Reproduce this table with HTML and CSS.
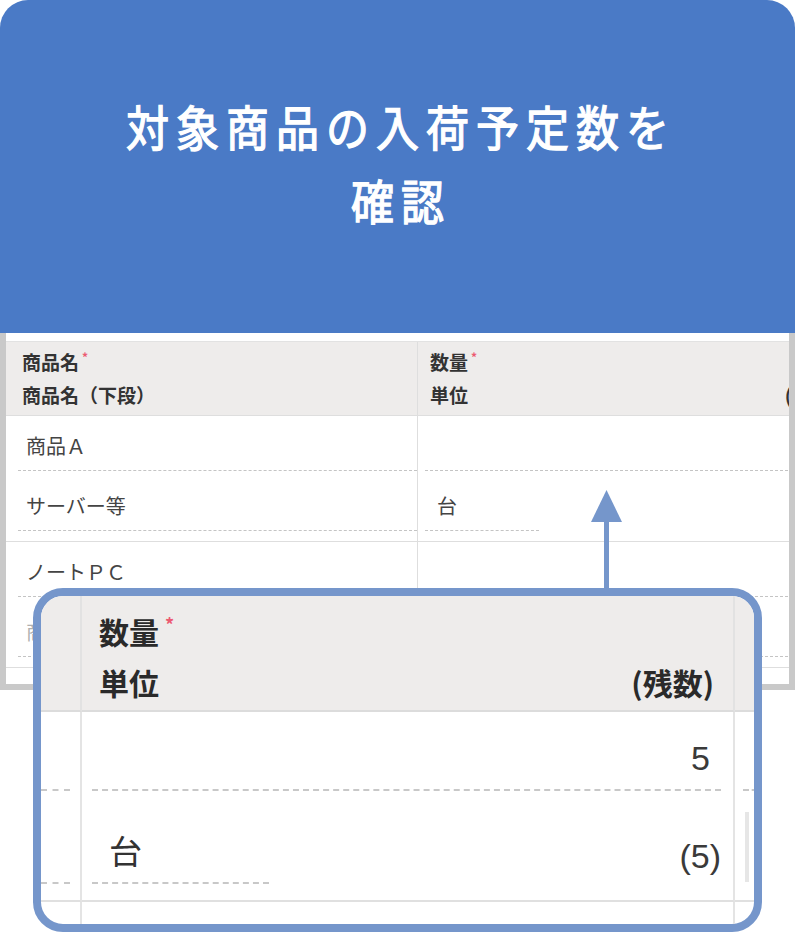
FILE: index.html
```html
<!DOCTYPE html>
<html lang="ja">
<head>
  <meta charset="UTF-8" />
  <title>対象商品の入荷予定数を確認</title>
  <link rel="stylesheet" href="styles.css">
</head>
<body>

<div class="card">
  <header class="banner">
    <h1>対象商品の入荷予定数を<br>確認</h1>
  </header>

  <!-- screenshot of the order table -->
  <div class="shot">
    <div class="grid">
      <div class="th">
        <div>商品名<span class="req">*</span></div>
        <div>商品名（下段）</div>
      </div>
      <div class="th th-last">
        <div>数量<span class="req">*</span></div>
        <div class="split"><span>単位</span><span>(残数)</span></div>
      </div>

      <div class="td">
        <div class="field">商品Ａ</div>
        <div class="field second">サーバー等</div>
      </div>
      <div class="td td-last">
        <div class="field num">5</div>
        <div class="split second">
          <div class="field unit">台</div>
          <span class="num">(5)</span>
        </div>
      </div>

      <div class="td">
        <div class="field">ノートＰＣ</div>
        <div class="field second faded">商品Ｂ</div>
      </div>
      <div class="td td-last">
        <div class="field"></div>
        <div class="field second"></div>
      </div>
    </div>
  </div>

  <svg class="arrow" width="32" height="102" viewBox="0 0 32 102">
    <polygon points="16.5,2 1,34 32,34" fill="#7596cb" />
    <rect x="14" y="33" width="5" height="69" fill="#7596cb" />
  </svg>

  <!-- magnified part -->
  <div class="lens">
    <div class="lens-grid">
      <div class="lh stub"></div>
      <div class="lh">
        <div>数量<span class="req big">*</span></div>
        <div class="split"><span>単位</span><span>(残数)</span></div>
      </div>
      <div class="lh edge"></div>

      <div class="ld stub">
        <div class="lfield"></div>
        <div class="lfield second"></div>
      </div>
      <div class="ld">
        <div class="lfield digits">5</div>
        <div class="split second">
          <div class="lfield unit">台</div>
          <span class="digits paren">(5)</span>
        </div>
      </div>
      <div class="ld edge">
        <div class="lfield"></div>
        <div class="scroll"></div>
      </div>

      <div class="ld stub tail"></div>
      <div class="ld tail"></div>
      <div class="ld edge tail"></div>
    </div>
  </div>
</div>

</body>
</html>
```

FILE: styles.css
```css
body {
  margin: 0;
  background: #ffffff;
  font-family: "Noto Sans CJK JP", sans-serif;
}

.card {
  position: relative;
  width: 795px;
  height: 933px;
  overflow: hidden;
  background: #ffffff;
}

.banner {
  height: 333px;
  box-sizing: border-box;
  padding-top: 96px;
  background: #4a7ac6;
  border-radius: 28px 28px 0 0;
}

.banner h1 {
  margin: 0;
  padding-left: 7px;
  color: #ffffff;
  font-size: 43px;
  font-weight: 400;
  line-height: 67px;
  letter-spacing: 7px;
  text-align: center;
  -webkit-text-stroke: 1.2px #ffffff;
  transform: scaleY(1.1);
}

/* table screenshot */
.shot {
  height: 357px;
  box-sizing: border-box;
  padding-top: 8px;
  border: 6px solid #c9c9c9;
  border-top: none;
  background: #ffffff;
  overflow: hidden;
}

.grid {
  display: grid;
  grid-template-columns: 412px 436px;
  border-top: 1px solid #e2e2e2;
}

.th {
  height: 74px;
  box-sizing: border-box;
  padding: 5px 16px 0 16px;
  background: #eeeceb;
  border-right: 1px solid #dedede;
  border-bottom: 1px solid #dedede;
  color: #333333;
  font-size: 19px;
  font-weight: 700;
  line-height: 30px;
}

.th-last {
  padding-left: 12px;
}

.req {
  position: relative;
  top: -8px;
  margin-left: 3px;
  color: #ec5a72;
  font-size: 12px;
}

.req.big {
  top: -12px;
  margin-left: 6px;
  font-size: 18px;
}

.split {
  display: flex;
  justify-content: space-between;
  align-items: center;
}

.td {
  box-sizing: border-box;
  padding: 0 0 10px 12px;
  border-right: 1px solid #dedede;
  border-bottom: 1px solid #dedede;
  color: #444444;
  font-size: 20px;
  line-height: 30px;
}

.td-last {
  padding-left: 7px;
}

.field {
  min-height: 30px;
  padding: 15px 8px 9px 8px;
  border-bottom: 1px dashed #c4c4c4;
}

.td-last .field {
  padding-left: 12px;
}

.second {
  margin-top: 5px;
}

.split.second .field {
  margin-top: 0;
}

.unit {
  width: 94px;
}

.num {
  text-align: right;
  padding-right: 16px;
  font-family: "Liberation Sans", sans-serif;
}

.faded {
  color: #b0b0b0;
}

/* arrow + magnifier overlay */
.arrow {
  position: absolute;
  left: 590px;
  top: 488px;
}

.lens {
  position: absolute;
  left: 33px;
  top: 588px;
  width: 729px;
  height: 344px;
  box-sizing: border-box;
  border: 8px solid #7596cb;
  border-radius: 30px;
  background: #ffffff;
  overflow: hidden;
}

.lens-grid {
  display: grid;
  grid-template-columns: 41px 653px 40px;
  grid-template-rows: 116px 190px 40px;
}

.lh {
  box-sizing: border-box;
  padding: 12px 19px 0 17px;
  background: #eeeceb;
  border-right: 2px solid #e2e2e2;
  border-bottom: 2px solid #dcdcdc;
  color: #2a2a2a;
  font-size: 30px;
  font-weight: 700;
  line-height: 46px;
}

.lh.stub,
.lh.edge {
  padding: 0;
}

.lh.edge {
  border-right: none;
}

.ld {
  box-sizing: border-box;
  padding: 0 12px 0 10px;
  border-right: 2px solid #e4e4e4;
  border-bottom: 2px solid #e0e0e0;
  color: #333333;
  font-size: 33px;
  line-height: 40px;
}

.ld.stub {
  padding: 0 10px 0 0;
}

.ld.edge {
  position: relative;
  padding: 0 0 0 8px;
  border-right: none;
}

.ld.tail {
  border-bottom: none;
}

.lfield {
  min-height: 40px;
  padding: 26px 11px 11px 17px;
  border-bottom: 2px dashed #c8c8c8;
}

.ld .second {
  margin-top: 0;
}

.lfield.second {
  padding-top: 39px;
  padding-bottom: 12px;
}

.split.second .lfield {
  padding-top: 39px;
  padding-bottom: 12px;
}

.lfield.unit {
  width: 149px;
}

.digits {
  text-align: right;
  font-family: "Liberation Sans", sans-serif;
  font-size: 34px;
  color: #3a3a3a;
}

.paren {
  padding-top: 36px;
}

.scroll {
  position: absolute;
  left: 10px;
  top: 100px;
  width: 4px;
  height: 70px;
  background: #e6e6e6;
}
```
